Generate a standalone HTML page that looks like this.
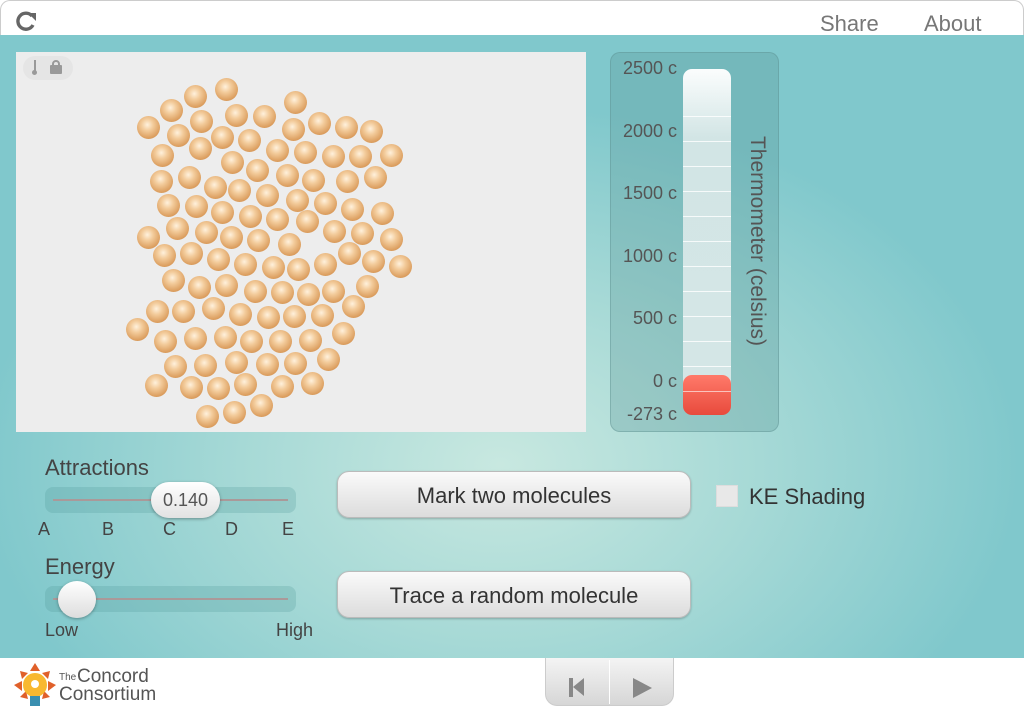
<!DOCTYPE html>
<html><head><meta charset="utf-8">
<style>
*{margin:0;padding:0;box-sizing:border-box}
body{width:1024px;height:712px;overflow:hidden;font-family:"Liberation Sans",sans-serif;color:#444;background:#fff;position:relative}
.top{position:absolute;left:0;top:0;width:1024px;height:36px;background:#fff;border:1px solid #ccc;border-bottom:none;border-radius:10px 10px 0 0}
.main{position:absolute;left:0;top:35px;width:1024px;height:623px;background:radial-gradient(ellipse 520px 360px at 500px 430px,#c8e8e0 0%,#a6d9d6 50%,#80c8cc 100%)}
.a{position:absolute}
.box{position:absolute;left:16px;top:52px;width:570px;height:380px;background:#ededed}
.m{position:absolute;width:23px;height:23px;border-radius:50%;background:radial-gradient(circle at 45% 38%,#fff1dc 0%,#f3cc9c 30%,#dc9f60 70%,#c07e40 100%)}
.therm{position:absolute;left:610px;top:52px;width:169px;height:380px;border-radius:10px;background:rgba(90,150,150,.3);border:1px solid rgba(90,140,140,.4)}
.lbl{position:absolute;font-size:18px;color:#555;text-align:right;white-space:nowrap}
.tube{position:absolute;left:683px;top:69px;width:48px;height:344px;border-radius:9px;background:linear-gradient(#fbfdfd,#d2e5e5 20%,#d5e6e6)}
.tick{position:absolute;left:683px;width:48px;height:1px;background:rgba(255,255,255,.8)}
.btn{position:absolute;width:354px;height:47px;border-radius:12px;background:linear-gradient(#fafafa,#dcdcdc);border:1px solid #bbb;box-shadow:0 1px 2px rgba(0,0,0,.25);font-size:22px;color:#333;text-align:center;line-height:48px}
.track{position:absolute;left:45px;width:251px;height:26px;border-radius:8px;background:rgba(80,150,150,.25)}
.track:after{content:"";position:absolute;left:8px;right:8px;top:12px;height:2px;background:#a99}
</style></head><body>
<div class="top">
<svg class="a" style="left:15px;top:10px" width="22" height="20" viewBox="0 0 22 20"><path d="M16 5 A8 8 0 1 0 17 14" fill="none" stroke="#666" stroke-width="3.4"/><path d="M12 2 L20 2 L20 10 Z" fill="#666"/></svg>
<div class="a" style="left:819px;top:10px;font-size:22px;color:#777">Share</div>
<div class="a" style="left:923px;top:10px;font-size:22px;color:#777">About</div>
</div>
<div class="main"></div>
<div class="box" id="box">
<div class="a" style="left:7px;top:4px;width:50px;height:24px;border-radius:12px;background:#e5e5e5"></div>
<div class="a" style="left:18px;top:8px;width:2px;height:12px;background:#999"></div>
<div class="a" style="left:16px;top:18px;width:5px;height:5px;border-radius:50%;background:#999"></div>
<div class="a" style="left:36px;top:8px;width:8px;height:8px;border:2px solid #999;border-radius:4px 4px 0 0"></div>
<div class="a" style="left:34px;top:13px;width:12px;height:9px;background:#999;border-radius:1px"></div>
</div>
<div class="therm"></div>
<div class="tube"></div>
<div class="tick" style="top:116px"></div><div class="tick" style="top:141px"></div><div class="tick" style="top:166px"></div><div class="tick" style="top:191px"></div><div class="tick" style="top:216px"></div><div class="tick" style="top:241px"></div><div class="tick" style="top:266px"></div><div class="tick" style="top:291px"></div><div class="tick" style="top:316px"></div><div class="tick" style="top:341px"></div><div class="tick" style="top:366px"></div>
<div class="a" style="left:683px;top:375px;width:48px;height:40px;border-radius:9px;background:linear-gradient(#ff7a6a,#e84a3c)"></div>
<div class="a" style="left:683px;top:391px;width:48px;height:1px;background:rgba(255,255,255,.6)"></div>
<div class="lbl" style="top:58px;right:347px">2500 c</div>
<div class="lbl" style="top:121px;right:347px">2000 c</div>
<div class="lbl" style="top:183px;right:347px">1500 c</div>
<div class="lbl" style="top:246px;right:347px">1000 c</div>
<div class="lbl" style="top:308px;right:347px">500 c</div>
<div class="lbl" style="top:371px;right:347px">0 c</div>
<div class="lbl" style="top:404px;right:347px">-273 c</div>
<div class="a" style="left:638px;top:228px;width:236px;height:26px;font-size:21px;color:#555;transform:rotate(90deg);text-align:center;white-space:nowrap">Thermometer (celsius)</div>

<div class="a" style="left:45px;top:455px;font-size:22px;color:#444">Attractions</div>
<div class="track" style="top:487px"></div>
<div class="a" style="left:151px;top:482px;width:69px;height:36px;border-radius:18px;background:linear-gradient(#fff,#e2e2e2);box-shadow:0 1px 3px rgba(0,0,0,.35);font-size:18px;text-align:center;line-height:36px;color:#555">0.140</div>
<div class="a" style="left:38px;top:519px;font-size:18px;color:#444">A</div>
<div class="a" style="left:102px;top:519px;font-size:18px;color:#444">B</div>
<div class="a" style="left:163px;top:519px;font-size:18px;color:#444">C</div>
<div class="a" style="left:225px;top:519px;font-size:18px;color:#444">D</div>
<div class="a" style="left:282px;top:519px;font-size:18px;color:#444">E</div>
<div class="a" style="left:45px;top:554px;font-size:22px;color:#444">Energy</div>
<div class="track" style="top:586px"></div>
<div class="a" style="left:58px;top:581px;width:38px;height:37px;border-radius:50%;background:linear-gradient(#fff,#ddd);box-shadow:0 1px 3px rgba(0,0,0,.35)"></div>
<div class="a" style="left:45px;top:620px;font-size:18px;color:#444">Low</div>
<div class="a" style="left:276px;top:620px;font-size:18px;color:#444">High</div>

<div class="btn" style="left:337px;top:471px">Mark two molecules</div>
<div class="btn" style="left:337px;top:571px">Trace a random molecule</div>
<div class="a" style="left:716px;top:485px;width:22px;height:22px;background:#e8e8e8;border:1px solid #ddd"></div>
<div class="a" style="left:749px;top:484px;font-size:22px;color:#333">KE Shading</div>

<div class="a" style="left:0;top:658px;width:1024px;height:54px;background:#fff"></div>
<svg class="a" style="left:12px;top:661px" width="46" height="50" viewBox="0 0 46 50">
<g fill="#e0602a"><polygon points="23,2 28,10 18,10"/><polygon points="8,10 16,12 10,18"/><polygon points="38,10 30,12 36,18"/><polygon points="2,24 10,20 10,30"/><polygon points="44,24 36,20 36,30"/><polygon points="8,36 14,30 16,38"/><polygon points="38,36 32,30 30,38"/></g>
<circle cx="23" cy="24" r="12" fill="#f8b830"/><circle cx="23" cy="23" r="4" fill="#fff"/>
<rect x="18" y="35" width="10" height="10" fill="#3a8fb0"/></svg>
<div class="a" style="left:59px;top:672px;font-size:10px;color:#555">The</div>
<div class="a" style="left:77px;top:666px;font-size:19px;color:#555">Concord</div>
<div class="a" style="left:59px;top:684px;font-size:19px;color:#555">Consortium</div>
<div class="a" style="left:545px;top:658px;width:129px;height:48px;border-radius:0 0 12px 12px;background:linear-gradient(#f4f4f4,#d6d6d6);border:1px solid #ccc;border-top:none"></div>
<div class="a" style="left:609px;top:660px;width:1px;height:44px;background:#fff"></div>
<div class="a" style="left:569px;top:678px;width:4px;height:19px;background:#888"></div>
<div class="a" style="left:573px;top:678px;width:0;height:0;border-top:9.5px solid transparent;border-bottom:9.5px solid transparent;border-right:11px solid #888"></div>
<div class="a" style="left:633px;top:678px;width:0;height:0;border-top:10px solid transparent;border-bottom:10px solid transparent;border-left:19px solid #888"></div>
<script>
var p=[226,89,195,96,295,102,171,110,236,115,264,116,201,121,319,123,346,127,148,127,178,135,222,137,249,140,293,129,371,131,162,155,200,148,277,150,305,152,333,156,360,156,391,155,232,162,257,170,287,175,161,181,189,177,215,187,239,190,267,195,313,180,347,181,375,177,168,205,196,206,222,212,250,216,277,219,297,200,325,203,352,209,382,213,148,237,177,228,206,232,231,237,258,240,289,244,307,221,334,231,362,233,391,239,164,255,191,253,218,259,245,264,273,267,298,269,325,264,349,253,373,261,400,266,173,280,199,287,226,285,255,291,282,292,308,294,333,291,367,286,157,311,183,311,213,308,240,314,268,317,294,316,322,315,353,306,137,329,165,341,195,338,225,337,251,341,280,341,310,340,343,333,175,366,205,365,236,362,267,364,295,363,328,359,156,385,191,387,218,388,245,384,282,386,312,383,261,405,234,412,207,416];
var b=document.getElementById('box'),h='';
for(var i=0;i<p.length;i+=2)h+='<div class="m" style="left:'+(p[i]-16-11.5)+'px;top:'+(p[i+1]-52-11.5)+'px"></div>';
b.insertAdjacentHTML('beforeend',h);
</script>
</body></html>
